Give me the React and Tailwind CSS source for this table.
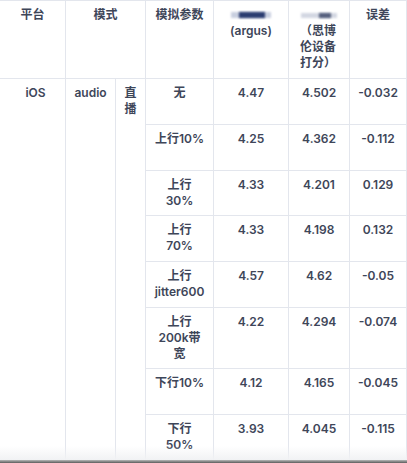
import React from 'react'

const rows = [
  { param: ['无'], a: '4.47', b: '4.502', d: '-0.032', h: 'h-[46px]' },
  { param: ['上行10%'], a: '4.25', b: '4.362', d: '-0.112', h: 'h-[46px]' },
  { param: ['上行', '30%'], a: '4.33', b: '4.201', d: '0.129', h: 'h-[45px]' },
  { param: ['上行', '70%'], a: '4.33', b: '4.198', d: '0.132', h: 'h-[46px]' },
  { param: ['上行', 'jitter600'], a: '4.57', b: '4.62', d: '-0.05', h: 'h-[46px]' },
  { param: ['上行', '200k带', '宽'], a: '4.22', b: '4.294', d: '-0.074', h: 'h-[61px]' },
  { param: ['下行10%'], a: '4.12', b: '4.165', d: '-0.045', h: 'h-[46px]' },
  { param: ['下行', '50%'], a: '3.93', b: '4.045', d: '-0.115', h: 'h-[60px]' },
]

const cell = 'border border-[#e3e6ed] align-top text-center pt-[6px] px-1'

function Lines({ items }) {
  return items.map((t, i) => (
    <div key={i} className="whitespace-nowrap">
      {t}
    </div>
  ))
}

export default function App() {
  return (
    <div
      className="w-[407px] h-[463px] bg-white flex flex-col overflow-hidden"
      style={{ fontFamily: 'Inter, "Noto Sans CJK SC", sans-serif' }}
    >
      <div className="relative h-[460px] overflow-hidden">
        <table className="table-fixed border-collapse w-[407px] -ml-px text-[12px] leading-4 font-semibold text-[#3e4659]">
          <colgroup>
            <col className="w-[66px]" />
            <col className="w-[50px]" />
            <col className="w-[30px]" />
            <col className="w-[68px]" />
            <col className="w-[75px]" />
            <col className="w-[61px]" />
            <col className="w-[57px]" />
          </colgroup>
          <thead>
            <tr className="h-[78px]">
              <th className={cell + ' font-semibold'}>平台</th>
              <th colSpan={2} className={cell + ' font-semibold'}>模式</th>
              <th className={cell + ' font-semibold'}>模拟参数</th>
              <th className={cell + ' font-semibold'}>
                <div className="h-4 flex items-center justify-center">
                  <span className="relative inline-block w-[40px] h-[6px]">
                    <span className="absolute left-0 top-0 w-[40px] h-[6px] bg-[#c9cfe0] blur-[1px]" />
                    <span className="absolute left-[8px] top-[0px] w-[26px] h-[6px] bg-[#2b3c70] blur-[1px]" />
                  </span>
                </div>
                <div>(argus)</div>
              </th>
              <th className={cell + ' font-semibold'}>
                <div className="h-4 flex items-center justify-center">
                  <span className="relative inline-block w-[36px] h-[5px]">
                    <span className="absolute left-0 top-0 w-[36px] h-[5px] bg-[#d3d7e2] blur-[1px]" />
                    <span className="absolute left-[18px] top-0 w-[12px] h-[5px] bg-[#56607e] blur-[1px]" />
                  </span>
                </div>
                <div className="text-left pl-[7px]">（思博</div>
                <div className="text-left pl-[7px]">伦设备</div>
                <div className="text-left pl-[7px]">打分）</div>
              </th>
              <th className={cell + ' font-semibold'}>误差</th>
            </tr>
          </thead>
          <tbody>
            {rows.map((r, i) => (
              <tr key={i} className={r.h}>
                {i === 0 && (
                  <>
                    <td rowSpan={rows.length} className={cell + ' pl-[10px]'}>iOS</td>
                    <td rowSpan={rows.length} className={cell}>audio</td>
                    <td rowSpan={rows.length} className={cell}>
                      <div>直</div>
                      <div>播</div>
                    </td>
                  </>
                )}
                <td className={cell}>
                  <Lines items={r.param} />
                </td>
                <td className={cell}>{r.a}</td>
                <td className={cell}>{r.b}</td>
                <td className={cell}>{r.d}</td>
              </tr>
            ))}
          </tbody>
        </table>
        <div className="pointer-events-none absolute left-0 right-0 bottom-0 h-[14px] bg-gradient-to-b from-transparent to-[#f1f2f4]" />
      </div>
      <div className="h-[3px] bg-gradient-to-b from-[#b9b9b9] to-[#5d5d5d]" />
    </div>
  )
}
